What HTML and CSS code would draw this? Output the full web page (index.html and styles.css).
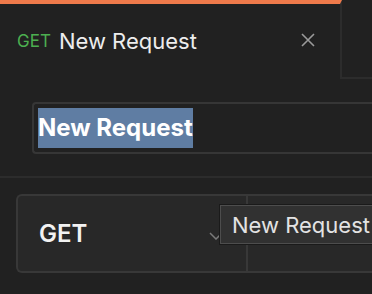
FILE: index.html
```html
<!DOCTYPE html>
<html lang="en">
<head>
    <meta charset="UTF-8">
    <meta name="viewport" content="width=device-width, initial-scale=1.0">
    <title>New Request</title>
    <link rel="stylesheet" href="styles.css">
</head>
<body>
    <div class="tabs">
        <div class="tab active">
            <span class="tab-method">GET</span>
            <span class="tab-title">New Request</span>
            <svg class="tab-close" width="16" height="16" viewBox="0 0 16 16">
                <path d="M2 2 L14 14 M14 2 L2 14" stroke="#9a9a9a" stroke-width="1.6" fill="none"/>
            </svg>
        </div>
        <div class="tab-rest"></div>
    </div>

    <div class="name-row">
        <div class="name-input">
            <span class="selection">New Request</span>
        </div>
    </div>

    <div class="request-row">
        <div class="url-bar">
            <div class="method-select">
                <span>GET</span>
                <svg class="chevron" width="14" height="8" viewBox="0 0 14 8">
                    <path d="M1 1 L7 7 L13 1" stroke="#7a7a7a" stroke-width="1.5" fill="none"/>
                </svg>
            </div>
            <div class="url-input"></div>
        </div>
        <div class="tooltip">New Request</div>
    </div>
</body>
</html>
```

FILE: styles.css
```css
body {
    margin: 0;
    padding: 0;
    background-color: #212121;
    font-family: Inter, "Noto Sans", sans-serif;
    color: #e6e6e6;
    overflow: hidden;
}
.tabs {
    display: flex;
    height: 79px;
}
.tab {
    width: 342px;
    box-sizing: border-box;
    border-top: 4px solid #ef7a4b;
    border-right: 2px solid #2c2c2c;
    display: flex;
    align-items: center;
    padding: 0 24px 2px 17px;
}
.tab-method {
    color: #4caf50;
    font-size: 17px;
    margin-right: 8px;
}
.tab-title {
    font-size: 22px;
    color: #ededed;
    flex: 1;
}
.tab-close {
    margin-bottom: 2px;
}
.tab-rest {
    flex: 1;
    border-bottom: 2px solid #2c2c2c;
    margin-top: 4px;
}
.name-row {
    padding: 23px 0 22px 32px;
    border-bottom: 2px solid #2c2c2c;
}
.name-input {
    height: 48px;
    border: 2px solid #363636;
    border-right: none;
    border-radius: 4px 0 0 4px;
    display: flex;
    align-items: center;
    padding-left: 4px;
}
.selection {
    background-color: #5f7da3;
    color: #ffffff;
    font-size: 24px;
    font-weight: 700;
    line-height: 40px;
}
.request-row {
    position: relative;
    padding: 16px 0 0 16px;
}
.url-bar {
    display: flex;
    height: 75px;
    background-color: #282828;
    border: 2px solid #383838;
    border-right: none;
    border-radius: 6px 0 0 6px;
}
.method-select {
    width: 230px;
    border-right: 2px solid #383838;
    display: flex;
    align-items: center;
    justify-content: space-between;
    padding: 0 23px 0 21px;
    box-sizing: border-box;
    font-size: 24px;
    font-weight: 600;
    color: #f2f2f2;
}
.chevron {
    margin-top: 4px;
}
.url-input {
    flex: 1;
}
.tooltip {
    position: absolute;
    left: 220px;
    top: 27px;
    height: 37px;
    padding: 0 11px;
    background-color: #313131;
    border: 1px solid #4d4d4d;
    box-shadow: 0 0 0 1px #1a1a1a;
    display: flex;
    align-items: center;
    font-size: 22px;
    color: #e3e3e3;
    white-space: nowrap;
}
```
